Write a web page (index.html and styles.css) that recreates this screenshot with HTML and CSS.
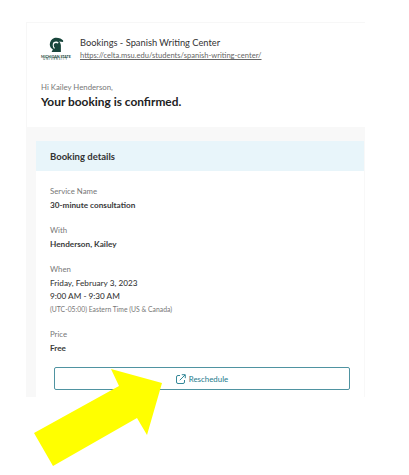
FILE: index.html
```html
<!DOCTYPE html>
<html lang="en">
<head>
    <meta charset="UTF-8">
    <meta name="viewport" content="width=device-width, initial-scale=1.0">
    <title>Booking confirmed</title>
    <link rel="stylesheet" href="styles.css">
</head>
<body>
    <div class="mail">
        <div class="top">
            <div class="brand">
                <div class="logo">
                    <svg width="16" height="16" viewBox="0 0 18 17">
                        <path fill="#18453b" d="M7 0.5 C11 -0.2 15.5 1 17 3.5 L17 5 L12.5 4.5 C14 6 14.8 8 14.5 11 L14.5 16.5 L4 16.5 L5.5 13.5 C3.5 12.5 2 10.5 2 8 C2 4.5 4 1.5 7 0.5 Z"/>
                        <path fill="#fff" d="M6.2 5.5 C8 4.2 11 4.5 12 6 L11 6.8 C9.5 5.8 8 6 7 7 C6 8.5 6.5 10.5 8 12 L6.8 12.6 C5 11 4.8 7.5 6.2 5.5 Z"/>
                    </svg>
                    <div class="logo-name">MICHIGAN STATE</div>
                    <div class="logo-sub">UNIVERSITY</div>
                </div>
                <div>
                    <div class="brand-name">Bookings - Spanish Writing Center</div>
                    <a class="brand-link" href="#">https://celta.msu.edu/students/spanish-writing-center/</a>
                </div>
            </div>
            <div class="hello">Hi Kailey Henderson,</div>
            <h1>Your booking is confirmed.</h1>
        </div>
        <div class="body">
            <div class="panel">
                <h2>Booking details</h2>
                <div class="rows">
                    <div class="row">
                        <div class="label">Service Name</div>
                        <div class="value">30-minute consultation</div>
                    </div>
                    <div class="row">
                        <div class="label">With</div>
                        <div class="value">Henderson, Kailey</div>
                    </div>
                    <div class="row">
                        <div class="label">When</div>
                        <div class="value when">Friday, February 3, 2023</div>
                        <div class="value when">9:00 AM - 9:30 AM</div>
                        <div class="zone">(UTC-05:00) Eastern Time (US &amp; Canada)</div>
                    </div>
                    <div class="row">
                        <div class="label">Price</div>
                        <div class="value">Free</div>
                    </div>
                </div>
                <button class="btn" type="button">
                    <svg width="10" height="10" viewBox="0 0 10 10" fill="none" stroke="#1d7a8c" stroke-width="0.9">
                        <path d="M4 1.5 H2 A1.5 1.5 0 0 0 0.5 3 V8 A1.5 1.5 0 0 0 2 9.5 H7 A1.5 1.5 0 0 0 8.5 8 V6"/>
                        <path d="M3.8 6.2 L9 1 M5.8 0.7 H9.3 V4.2"/>
                    </svg>
                    Reschedule
                </button>
            </div>
        </div>
    </div>
    <svg class="arrow" width="409" height="475" viewBox="0 0 409 475">
        <polygon fill="#ffff00" points="111,369 162,383 147,435 137,418 53,466 34,433 119,386"/>
    </svg>
</body>
</html>
```

FILE: styles.css
```css
body {
    font-family: Lato, "Open Sans", sans-serif;
    background-color: #fff;
    color: #222;
    margin: 0;
    height: 475px;
    overflow: hidden;
    position: relative;
}
.mail {
    width: 339px;
    margin: 22px 0 0 26px;
}
.top {
    height: 105px;
    box-sizing: border-box;
    padding: 13px 0 0 14px;
    border-top: 1px solid #f7f7f7;
    border-left: 1px solid #f7f7f7;
}
.brand {
    display: flex;
    align-items: center;
    gap: 10px;
}
.logo {
    width: 29px;
    text-align: center;
    line-height: 1;
}
.logo svg {
    display: block;
    margin: 0 auto 2px;
}
.logo-name {
    font-size: 3.6px;
    font-weight: 700;
    color: #18453b;
    white-space: nowrap;
}
.logo-sub {
    font-size: 3px;
    letter-spacing: 0.8px;
    color: #18453b;
}
.brand-name {
    font-size: 9.3px;
    line-height: 14px;
    color: #333;
}
.brand-link {
    display: block;
    font-size: 7.55px;
    line-height: 12px;
    color: #666;
    text-decoration: underline;
    white-space: nowrap;
}
.hello {
    font-size: 7.8px;
    line-height: 12px;
    color: #777;
    margin-top: 19px;
}
h1 {
    font-size: 11.9px;
    line-height: 16px;
    font-weight: 700;
    color: #222;
    margin: 1px 0 0;
}
.body {
    height: 270px;
    box-sizing: border-box;
    padding: 14px 1px 0 10px;
    background-color: #f8f8f8;
    overflow: hidden;
}
.panel {
    background-color: #fff;
    height: 256px;
}
h2 {
    font-size: 9.5px;
    line-height: 31px;
    height: 30px;
    font-weight: 700;
    color: #333;
    margin: 0;
    padding-left: 14px;
    background-color: #e8f5fa;
}
.rows {
    padding: 14px 0 0 14px;
}
.row {
    margin-bottom: 13px;
}
.label {
    font-size: 7.8px;
    line-height: 12px;
    color: #777;
    margin-bottom: 2px;
}
.value {
    font-size: 8.2px;
    line-height: 12px;
    font-weight: 700;
    color: #3a3a3a;
}
.when {
    font-size: 8.2px;
    font-weight: 500;
    line-height: 13px;
}
.zone {
    font-size: 6.8px;
    line-height: 12px;
    color: #777;
}
.btn {
    display: flex;
    align-items: center;
    justify-content: center;
    gap: 3px;
    width: 296px;
    height: 23px;
    margin: 0 0 0 18px;
    padding: 0;
    font-family: inherit;
    font-size: 7.9px;
    color: #1d7a8c;
    background-color: #fff;
    border: 1px solid #4f93a1;
    border-radius: 2px;
}
.arrow {
    position: absolute;
    left: 0;
    top: 0;
}
```
